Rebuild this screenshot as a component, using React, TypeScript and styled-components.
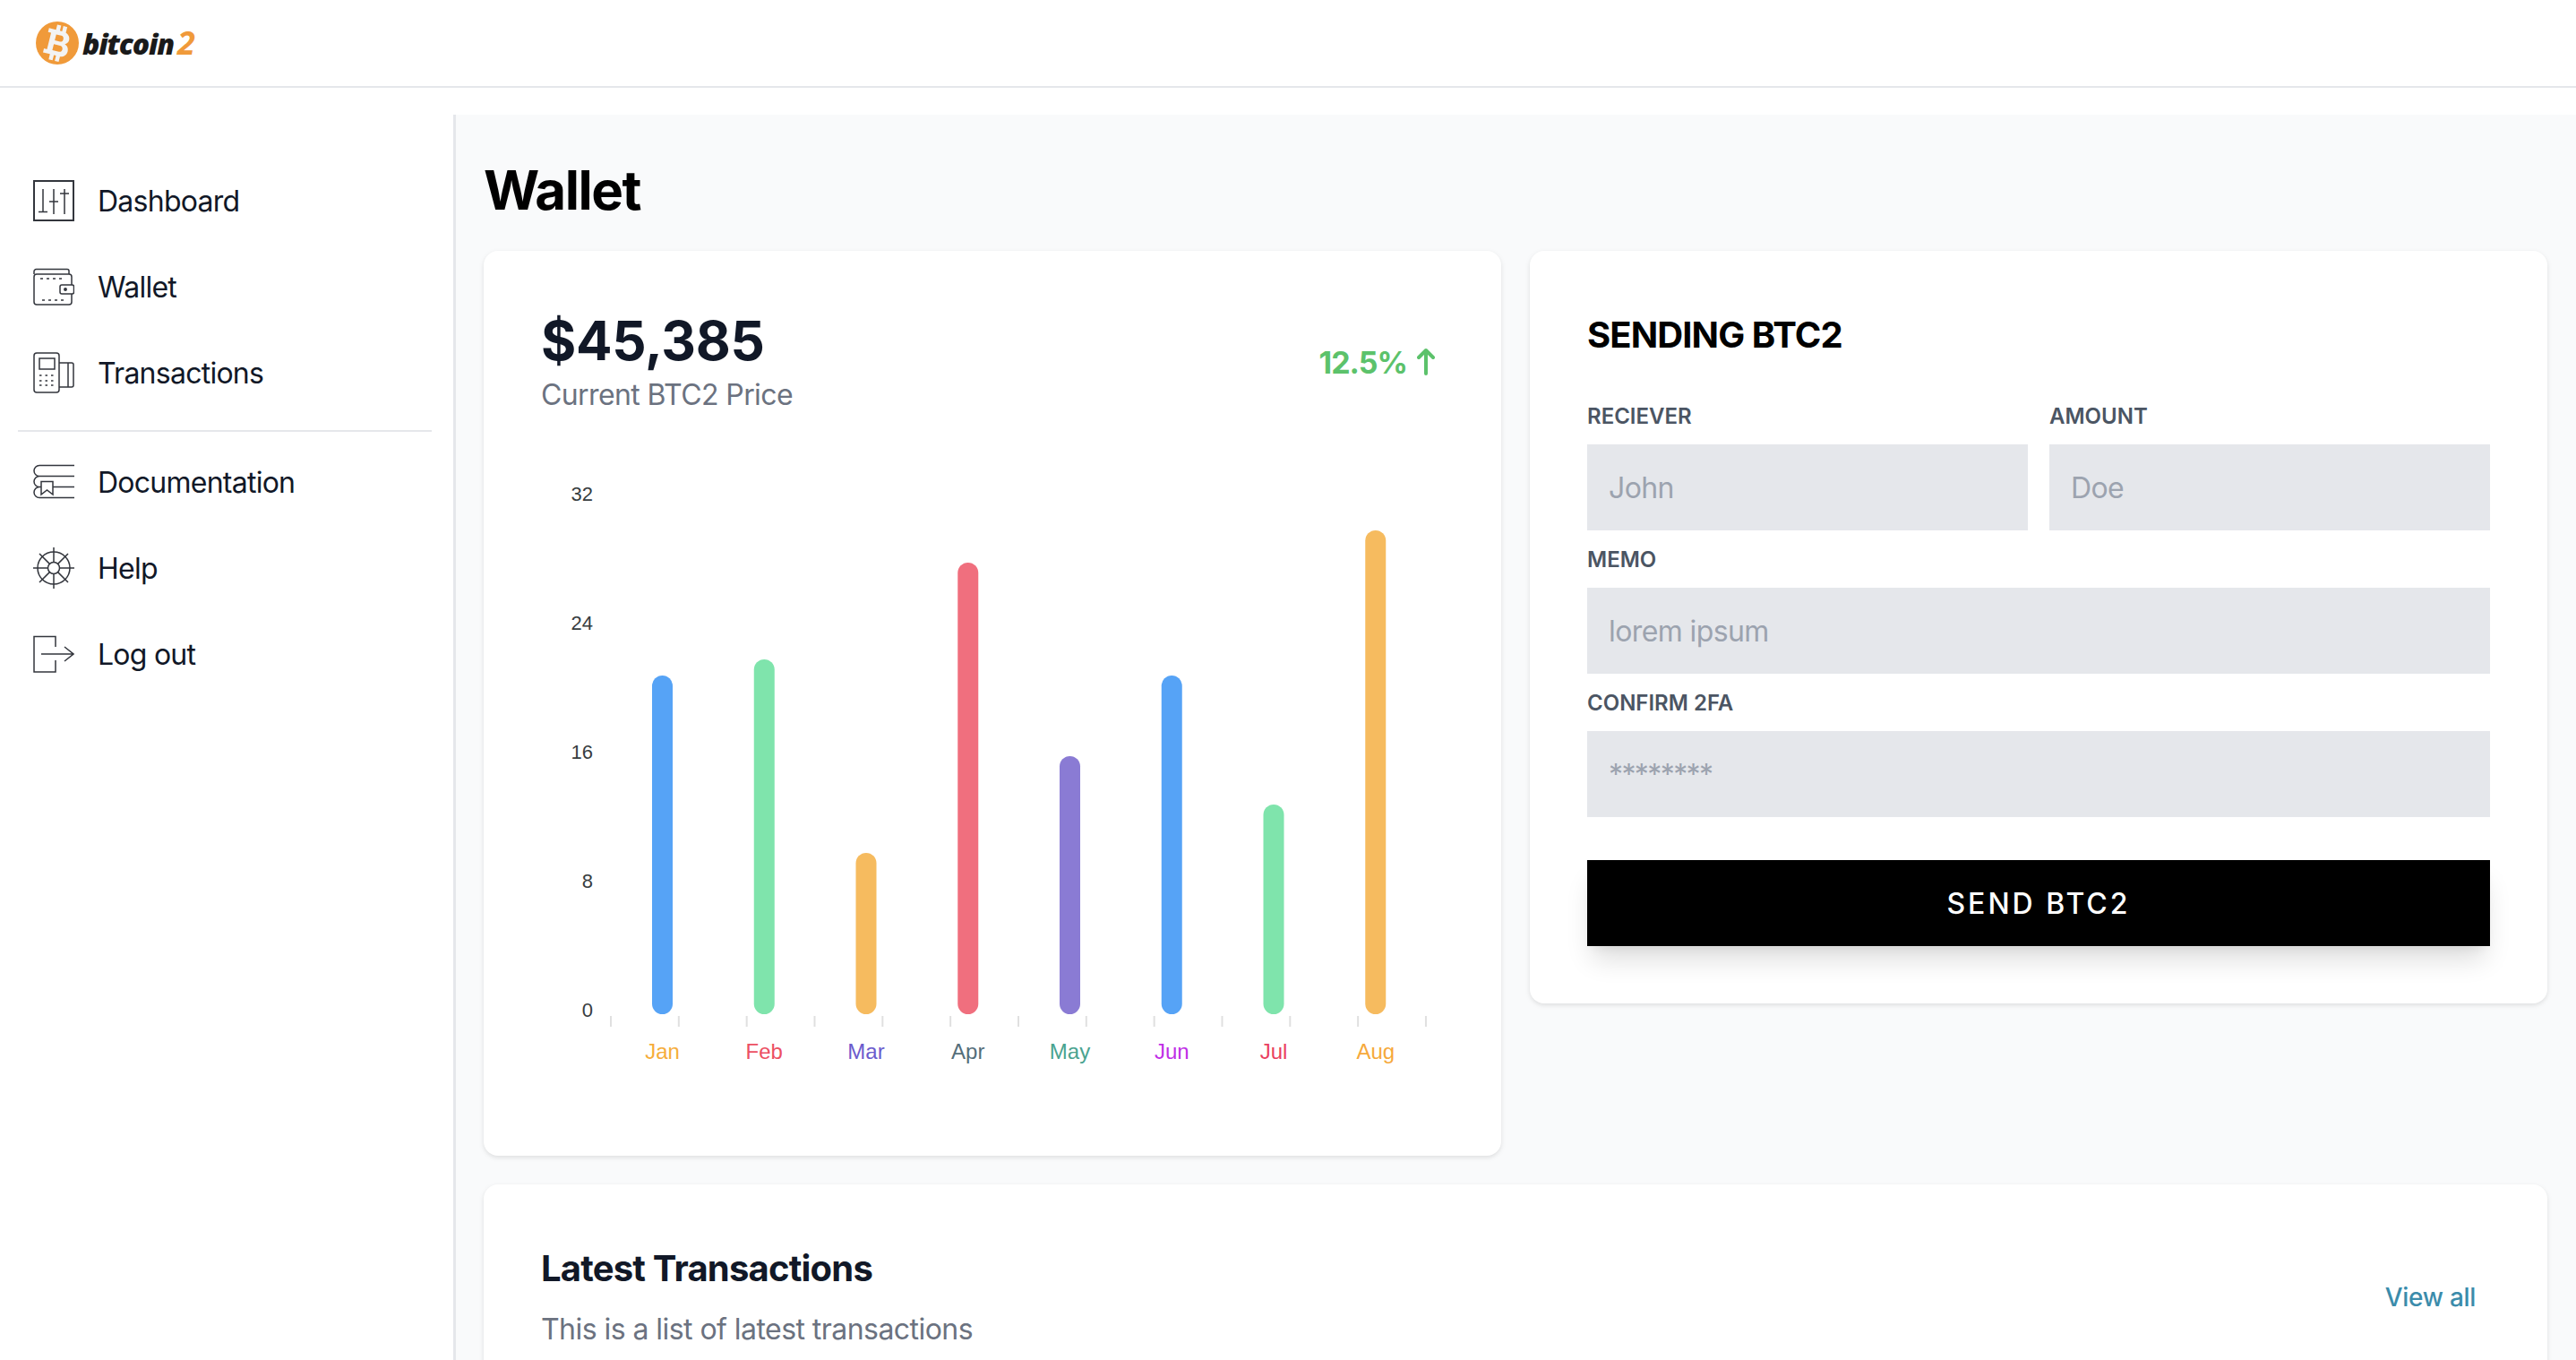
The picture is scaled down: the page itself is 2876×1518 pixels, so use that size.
import React from 'react';
import styled, { createGlobalStyle } from 'styled-components';

const GlobalStyle = createGlobalStyle`
  * {
    box-sizing: border-box;
  }
  html,
  body {
    margin: 0;
    height: 100%;
    overflow: hidden;
    background: #fff;
    font-family: Inter, 'Liberation Sans', sans-serif;
  }
`;

const Page = styled.div`
  display: flex;
  flex-direction: column;
  height: 100vh;
  overflow: hidden;
`;

const Header = styled.header`
  flex: none;
  display: flex;
  align-items: center;
  height: 98px;
  padding-left: 40px;
  border-bottom: 2px solid #e5e7eb;
`;

const Logo = styled.div`
  display: flex;
  align-items: center;
  gap: 4px;
`;

const LogoMark = styled.svg.attrs({ viewBox: '0 0 48 48' })`
  flex: none;
  width: 48px;
  height: 48px;
`;

const LogoText = styled.span`
  font-family: 'Open Sans', sans-serif;
  font-size: 32px;
  font-weight: 800;
  font-style: italic;
  letter-spacing: -1.2px;
  color: #1a1a1a;
`;

const LogoTwo = styled.span`
  margin-left: 4px;
  font-size: 36px;
  line-height: 32px;
  font-weight: 700;
  color: #f09a3a;
`;

const Body = styled.div`
  flex: 1;
  display: flex;
  margin-top: 30px;
  min-height: 0;
`;

const Sidebar = styled.nav`
  flex: none;
  width: 506px;
  padding: 48px 24px 0 20px;
`;

const NavItem = styled.a`
  display: flex;
  align-items: center;
  gap: 26px;
  height: 96px;
  padding-left: 17px;
  font-size: 32px;
  letter-spacing: -0.75px;
  color: #111827;
`;

const Divider = styled.hr`
  height: 2px;
  margin: 16px 0 8px;
  border: 0;
  background: #e5e7eb;
`;

const Icon = styled.svg.attrs({ viewBox: '0 0 46 46' })`
  flex: none;
  width: 46px;
  height: 46px;
  fill: none;
  stroke: #33363d;
  stroke-width: 1.5;
`;

const Main = styled.main`
  flex: 1;
  min-width: 0;
  padding: 48px 32px 0 31px;
  background: #f9fafb;
  border-left: 3px solid #e5e7eb;
`;

const PageTitle = styled.h1`
  margin: 0 0 32px;
  font-size: 60px;
  line-height: 72px;
  font-weight: 700;
  letter-spacing: -1.5px;
  color: #000;
`;

const Grid = styled.div`
  display: grid;
  grid-template-columns: 1136px 1136px;
  gap: 32px;
  align-items: start;
`;

const Card = styled.section`
  padding: 64px;
  background: #fff;
  border-radius: 16px;
  box-shadow: 0 2px 6px rgba(0, 0, 0, 0.08), 0 2px 4px rgba(0, 0, 0, 0.04);
`;

const ChartCard = styled(Card)`
  height: 1010px;
`;

const WideCard = styled(Card)`
  grid-column: 1 / 3;
  height: 400px;
`;

const PriceRow = styled.div`
  display: flex;
  justify-content: space-between;
  align-items: center;
  padding-right: 10px;
`;

const Price = styled.div`
  font-size: 60px;
  line-height: 72px;
  font-weight: 700;
  letter-spacing: -0.3px;
  color: #111827;
`;

const PriceNote = styled.div`
  padding-top: 2px;
  font-size: 32px;
  line-height: 46px;
  letter-spacing: -0.6px;
  color: #6b7280;
`;

const Change = styled.div`
  display: flex;
  align-items: center;
  gap: 11px;
  font-size: 34px;
  font-weight: 700;
  letter-spacing: -1px;
  color: #5cc26b;
`;

const Arrow = styled.svg.attrs({ viewBox: '0 0 20 32' })`
  width: 20px;
  height: 32px;
  fill: none;
  stroke: #5cc26b;
  stroke-width: 4;
  stroke-linecap: round;
  stroke-linejoin: round;
`;

const Chart = styled.svg.attrs({ viewBox: '0 0 1008 690' })`
  display: block;
  width: 1008px;
  height: 690px;
  margin-top: 56px;
`;

const YLabel = styled.text`
  font-family: 'Liberation Sans', sans-serif;
  font-size: 22px;
  fill: #373d3f;
  text-anchor: end;
`;

const XLabel = styled.text<{ $color: string }>`
  font-family: 'Liberation Sans', sans-serif;
  font-size: 24px;
  fill: ${(p) => p.$color};
  text-anchor: middle;
`;

const FormTitle = styled.h2`
  margin: 0 0 44px;
  font-size: 40px;
  line-height: 60px;
  font-weight: 700;
  letter-spacing: -0.9px;
  color: #000;
`;

const Row = styled.div`
  display: grid;
  grid-template-columns: 1fr 1fr;
  gap: 24px;
`;

const Field = styled.div`
  margin-bottom: 16px;
`;

const FieldLabel = styled.label`
  display: block;
  margin-bottom: 14px;
  font-size: 24px;
  line-height: 34px;
  font-weight: 600;
  color: #4b5563;
`;

const Input = styled.input`
  display: block;
  width: 100%;
  height: 96px;
  padding: 0 24px;
  border: 0;
  border-radius: 0;
  outline: 0;
  background: #e5e7eb;
  font-family: Inter, sans-serif;
  font-size: 32px;
  letter-spacing: -0.6px;
  color: #111827;

  &::placeholder {
    color: #9ca3af;
    opacity: 1;
  }
`;

const CodeInput = styled(Input)`
  letter-spacing: -1.6px;
`;

const SendButton = styled.button`
  display: block;
  width: 100%;
  height: 96px;
  margin-top: 48px;
  border: 0;
  background: #000;
  font-family: Inter, sans-serif;
  font-size: 32px;
  font-weight: 500;
  letter-spacing: 3px;
  color: #fff;
  box-shadow: 0 20px 30px -6px rgba(0, 0, 0, 0.14), 0 8px 12px -6px rgba(0, 0, 0, 0.06);
`;

const ListHeader = styled.div`
  display: flex;
  justify-content: space-between;
  align-items: center;
  padding-right: 16px;
`;

const ListTitle = styled.h2`
  margin: 0 0 16px;
  padding-top: 2px;
  font-size: 40px;
  line-height: 56px;
  font-weight: 700;
  letter-spacing: -0.8px;
  color: #111827;
`;

const ListNote = styled.p`
  margin: 0;
  font-size: 32px;
  line-height: 48px;
  letter-spacing: -0.55px;
  color: #6b7280;
`;

const ViewAll = styled.a`
  padding-top: 2px;
  font-size: 28px;
  font-weight: 500;
  letter-spacing: -0.3px;
  color: #3b8cab;
`;

const BitcoinMark = () => (
  <LogoMark>
    <circle cx="24" cy="24" r="24" fill="#f09a3a" />
    <g transform="rotate(14 24 24)">
      <path
        fillRule="evenodd"
        fill="#f3f3f3"
        d="M19 4h4.5v6h2.5V4h4.5v6.6C34 12 36 14.4 36 17.6c0 2.6-1.4 4.6-3.6 5.6C35.2 24.2 37.5 26.6 37.5 30.4c0 4.4-3.2 7.2-7 7.6V44H26v-6h-2.500v6H19v-6h-8v-4.500h3.500V14.500H11V10h8ZM20.500 15v6.800h6c2 0 3-1.500 3-3.400S28.500 15 26.500 15ZM20.500 26.200V33h7.500c2 0 3.200-1.500 3.200-3.400s-1.400-3.400-3.400-3.400Z"
      />
    </g>
  </LogoMark>
);

const DashboardIcon = () => (
  <Icon>
    <rect x="1" y="1" width="44" height="44" strokeWidth="2" />
    <path d="M11 10V36M6 35.5H16M23 10V38M18 24H28M35 10V38M30 15H40" />
  </Icon>
);

const WalletIcon = () => (
  <Icon>
    <path d="M1 9V6a2.5 2.5 0 0 1 2.5-2.5H38a2 2 0 0 1 2 2V9" />
    <rect x="1" y="9" width="42" height="34" rx="3" />
    <rect x="30" y="21" width="15.5" height="10" rx="2" fill="#fff" />
    <circle cx="36" cy="26" r="1.2" fill="#33363d" />
    <path d="M8 14H34M10 38H36" strokeDasharray="3 4" />
  </Icon>
);

const TransactionsIcon = () => (
  <Icon>
    <rect x="1" y="1" width="28" height="44" rx="3" />
    <rect x="7" y="7" width="17" height="12" />
    <path d="M7 26H25M7 32H25M7 37H25" strokeDasharray="2.5 4" />
    <path d="M29 12H43a2 2 0 0 1 2 2V37a2 2 0 0 1-2 2H29M39 12V39" />
  </Icon>
);

const DocsIcon = () => (
  <Icon>
    <path d="M46 4.5H7a6 6 0 0 0 0 12H46M7 16.5a6 6 0 0 0 0 12H9M22 28.5H46M7 28.5a6 6 0 0 0 0 12H46" />
    <path d="M9 22.5H22V37L15.5 32L9 37Z" fill="#fff" />
  </Icon>
);

const HelpIcon = () => (
  <Icon>
    <circle cx="23" cy="23" r="18" />
    <circle cx="23" cy="23" r="6.5" />
    <path d="M23 0V16.5M23 29.5V46M0 23H16.5M29.5 23H46M7 7L18.4 18.4M27.6 27.6L39 39M39 7L27.6 18.4M18.4 27.6L7 39" />
  </Icon>
);

const LogoutIcon = () => (
  <Icon>
    <path d="M25 15V3.5H1V43H25V30M9 23H45M35 15L45 23L35 31" />
  </Icon>
);

const topNav = [
  { label: 'Dashboard', icon: <DashboardIcon /> },
  { label: 'Wallet', icon: <WalletIcon /> },
  { label: 'Transactions', icon: <TransactionsIcon /> },
];

const bottomNav = [
  { label: 'Documentation', icon: <DocsIcon /> },
  { label: 'Help', icon: <HelpIcon /> },
  { label: 'Log out', icon: <LogoutIcon /> },
];

const BLUE = '#56a3f6';
const GREEN = '#7fe4ac';
const ORANGE = '#f6bb5f';
const RED = '#f06f7e';
const PURPLE = '#8a7bd4';

const bars = [
  { month: 'Jan', value: 21, bar: BLUE, text: '#f6ad3b' },
  { month: 'Feb', value: 22, bar: GREEN, text: '#ec4f62' },
  { month: 'Mar', value: 10, bar: ORANGE, text: '#6b5bcd' },
  { month: 'Apr', value: 28, bar: RED, text: '#546e7a' },
  { month: 'May', value: 16, bar: PURPLE, text: '#4aa390' },
  { month: 'Jun', value: 21, bar: BLUE, text: '#c02ee6' },
  { month: 'Jul', value: 13, bar: GREEN, text: '#ea3f5f' },
  { month: 'Aug', value: 30, bar: ORANGE, text: '#f6a93b' },
];

// chart coordinates, origin is the top left of the svg
const BASE_Y = 612;
const UNIT = 18;

const PriceChart = () => (
  <Chart>
    {[32, 24, 16, 8, 0].map((v, i) => (
      <YLabel key={v} x={58} y={39 + i * 144}>
        {v}
      </YLabel>
    ))}
    {Array.from({ length: 13 }, (_, i) => (
      <line key={i} x1={78 + i * 75.83} x2={78 + i * 75.83} y1={614} y2={626} stroke="#e0e0e0" strokeWidth="2" />
    ))}
    {bars.map((b, i) => {
      const cx = 135.5 + i * 113.75;
      const h = b.value * UNIT;
      return (
        <g key={b.month}>
          <rect x={cx - 11.5} y={BASE_Y - h} width="23" height={h} rx="11.5" fill={b.bar} />
          <XLabel x={cx} y={662} $color={b.text}>
            {b.month}
          </XLabel>
        </g>
      );
    })}
  </Chart>
);

const App = () => (
  <Page>
    <GlobalStyle />
    <Header>
      <Logo>
        <BitcoinMark />
        <LogoText>
          bitcoin<LogoTwo>2</LogoTwo>
        </LogoText>
      </Logo>
    </Header>
    <Body>
      <Sidebar>
        {topNav.map((item) => (
          <NavItem key={item.label}>
            {item.icon}
            {item.label}
          </NavItem>
        ))}
        <Divider />
        {bottomNav.map((item) => (
          <NavItem key={item.label}>
            {item.icon}
            {item.label}
          </NavItem>
        ))}
      </Sidebar>
      <Main>
        <PageTitle>Wallet</PageTitle>
        <Grid>
          <ChartCard>
            <PriceRow>
              <div>
                <Price>$45,385</Price>
                <PriceNote>Current BTC2 Price</PriceNote>
              </div>
              <Change>
                12.5%
                <Arrow>
                  <path d="M10 29V3M2 11L10 3L18 11" />
                </Arrow>
              </Change>
            </PriceRow>
            <PriceChart />
          </ChartCard>
          <Card>
            <FormTitle>SENDING BTC2</FormTitle>
            <Row>
              <Field>
                <FieldLabel>RECIEVER</FieldLabel>
                <Input placeholder="John" />
              </Field>
              <Field>
                <FieldLabel>AMOUNT</FieldLabel>
                <Input placeholder="Doe" />
              </Field>
            </Row>
            <Field>
              <FieldLabel>MEMO</FieldLabel>
              <Input placeholder="lorem ipsum" />
            </Field>
            <Field>
              <FieldLabel>CONFIRM 2FA</FieldLabel>
              <CodeInput placeholder="********" />
            </Field>
            <SendButton>SEND BTC2</SendButton>
          </Card>
          <WideCard>
            <ListHeader>
              <div>
                <ListTitle>Latest Transactions</ListTitle>
                <ListNote>This is a list of latest transactions</ListNote>
              </div>
              <ViewAll>View all</ViewAll>
            </ListHeader>
          </WideCard>
        </Grid>
      </Main>
    </Body>
  </Page>
);

export default App;
